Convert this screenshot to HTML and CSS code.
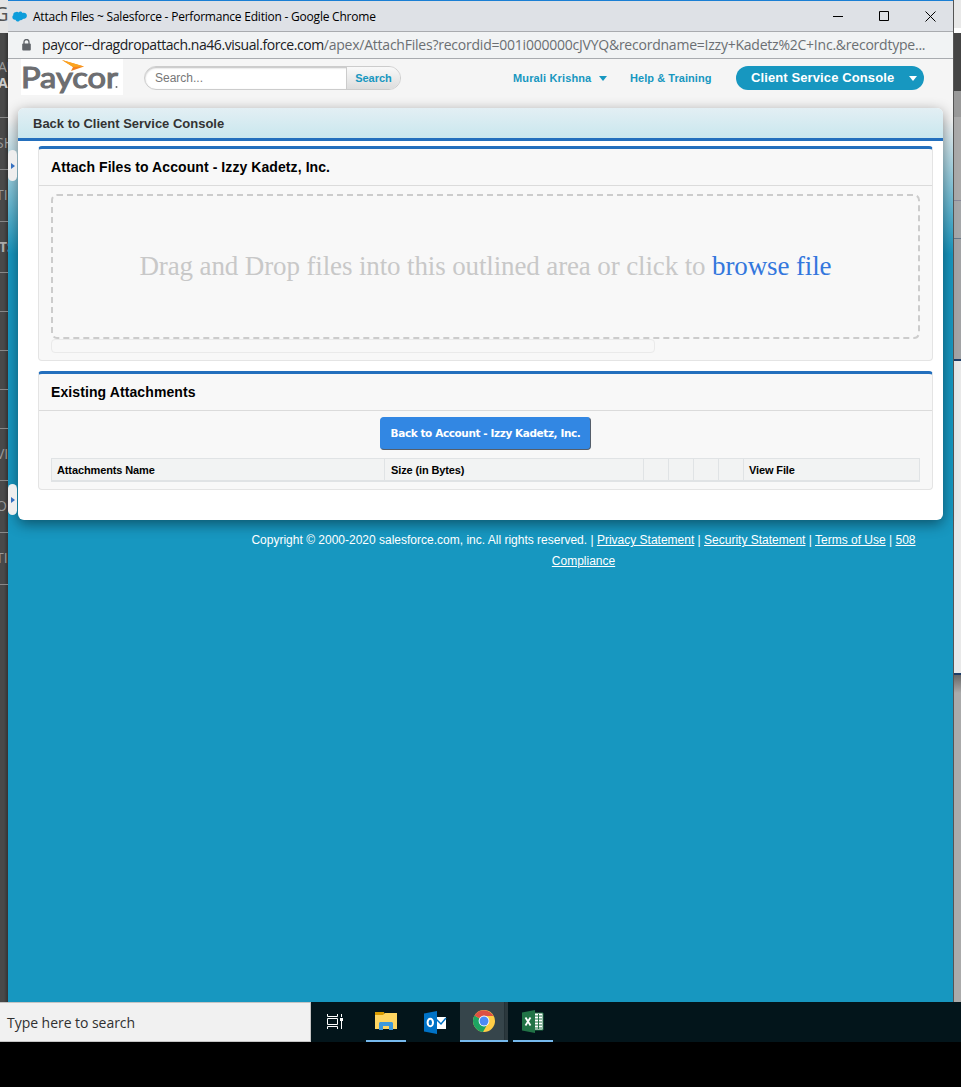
FILE: index.html
```html
<!DOCTYPE html>
<html lang="en">
<head>
<meta charset="utf-8">
<title>Attach Files ~ Salesforce - Performance Edition</title>
<link rel="stylesheet" href="styles.css">
</head>
<body>
<div class="desktop">
  <aside class="behind-left">
    <div class="bl-tab">G</div>
    <div class="bl-item bl-first"><span>AU</span><b>A</b></div>
    <div class="bl-item tall">SH</div>
    <div class="bl-item tall">TI</div>
    <div class="bl-item tall"><b class="dim">TS</b></div>
    <div class="bl-item"></div>
    <div class="bl-item"></div>
    <div class="bl-item"></div>
    <div class="bl-item"></div>
    <div class="bl-item tall">VI</div>
    <div class="bl-item tall">OF</div>
    <div class="bl-item tall last">TI</div>
  </aside>
  <main class="window">
    <div class="titlebar">
      <svg class="cloud" width="15" height="12" viewBox="0 0 15 12"><path d="M3.2 1.2C4.8.2 6 .7 6.500 1.500 8-.2 10 .6 10.500 2c2.200-.9 4.500.4 4.400 2.800 0 2.200-1.900 3.400-3.800 3-.7 1.300-2.100 1.600-3.100 1.100C7 11.200 4.200 11 3.500 8.800 1.600 9.200.2 7.800.4 6c0-1 .5-1.500 1-2C.8 3 1.600 1.700 3.200 1.200Z" fill="#0d9ddb"/></svg>
      <span class="t-title">Attach Files ~ Salesforce - Performance Edition - Google Chrome</span>
      <svg class="controls" width="104" height="12" viewBox="0 0 104 12" fill="none" stroke="#000"><path d="M0 5.500h10M46.500.5h9v9h-9zM92.500.5l10 10M102.500.5l-10 10"/></svg>
    </div>
    <div class="urlbar">
      <svg width="9" height="12" viewBox="0 0 9 12"><path d="M2 5V3a2.500 2.500 0 0 1 5 0v2" fill="none" stroke="#5f6368" stroke-width="1.300"/><rect x=".2" y="4.500" width="8.600" height="7" rx="1" fill="#5f6368"/></svg>
      <span class="t-url"><i>paycor--dragdropattach.na46.visual.force.com</i>/apex/AttachFiles?recordid=001i000000cJVYQ&amp;recordname=Izzy+Kadetz%2C+Inc.&amp;recordtype...</span>
    </div>
    <div class="page">
      <header class="head">
        <div class="logo">
          <svg width="102" height="35" viewBox="0 0 102 35"><path d="M41 1 63 7.500 50 12 52 8Z" fill="#f58220"/><path d="M41 1 63 7.500 52 8Z" fill="#fba51f"/><text x="0" y="29" class="logo-text" textLength="97" lengthAdjust="spacingAndGlyphs">Paycor</text><circle cx="95.500" cy="28" r="1" fill="#6d6e71"/></svg>
        </div>
        <div class="search"><span class="s-in">Search...</span><span class="s-btn">Search</span></div>
        <span class="user">Murali Krishna</span><i class="caret blue"></i>
        <span class="help">Help &amp; Training</span>
        <div class="app"><span>Client Service Console</span><i class="caret white"></i></div>
      </header>
      <section class="panel">
        <div class="panel-head">Back to Client Service Console</div>
        <div class="card upload">
          <h2 class="h-one">Attach Files to Account - Izzy Kadetz, Inc.</h2>
          <svg class="drop" width="869" height="145" viewBox="0 0 869 145"><rect x="1" y="1" width="867" height="143" rx="5" fill="none" stroke="#ccc" stroke-width="2" stroke-dasharray="6 4"/><text x="88.500" y="81" class="drop-text" textLength="692" lengthAdjust="spacing">Drag and Drop files into this outlined area or click to <tspan fill="#3377dd">browse file</tspan></text></svg>
          <div class="progress"></div>
        </div>
        <div class="card existing">
          <h2 class="h-two">Existing Attachments</h2>
          <div class="back"><span>Back to Account - Izzy Kadetz, Inc.</span></div>
          <div class="table"><span class="c1">Attachments Name</span><span class="c2">Size (in Bytes)</span><span></span><span></span><span></span><span></span><span class="c3">View File</span></div>
        </div>
      </section>
      <footer class="foot">
        <div class="f-one">Copyright © 2000-2020 salesforce.com, inc. All rights reserved. | <u>Privacy Statement</u> | <u>Security Statement</u> | <u>Terms of Use</u> | <u>508</u></div>
        <div class="f-two"><u>Compliance</u></div>
      </footer>
      <i class="handle h1"></i>
      <i class="handle h2"></i>
    </div>
  </main>
  <aside class="behind-right"><i class="r1"></i><i class="r2"></i><i class="r3"></i><i class="r4"></i><i class="r5"></i><i class="r6"></i><i class="r7"></i></aside>
</div>
<div class="taskbar">
  <div class="type"><span>Type here to search</span></div>
  <div class="task view"><svg width="18" height="18" viewBox="0 0 18 18" fill="none" stroke="#fff"><path d="M1.500 1v2.500h10V1M1.500 16v-2.500h10V16M1.500 5.500h10v6h-10zM15.500 1v3M15.500 8v8"/><path d="M14 5h3v3h-3z" fill="#fff" stroke="none"/></svg></div>
  <div class="task on"><svg width="22" height="19" viewBox="0 0 22 19"><path d="M0 0h9l1 3H0z" fill="#d99b00"/><path d="M0 3h8l2-2h12v16H0z" fill="#ffd561"/><path d="M4 18v-7l1-1h12l1 1v7h-4v-4H8v4z" fill="#3e99dc"/></svg></div>
  <div class="task"><svg width="24" height="23" viewBox="0 0 24 23"><path d="M12 6h11v12H12z" fill="#fff"/><path d="m13 8 5 5 5-6" fill="none" stroke="#0072c6" stroke-width="1.500"/><path d="M1 2.500 14 0v23L1 20.500z" fill="#0072c6"/><ellipse cx="7.300" cy="11.500" rx="2.700" ry="3.700" fill="none" stroke="#fff" stroke-width="2"/></svg></div>
  <div class="task active on"><svg width="24" height="24" viewBox="0 0 24 24"><circle cx="12" cy="12" r="11" fill="#ffcd46"/><path d="M12 12 2.500 6.500A11 11 0 0 0 11 23l5-9z" fill="#1da462"/><path d="M12 12 2.500 6.500A11 11 0 0 1 21.500 7H12z" fill="#dd5144"/><circle cx="12" cy="12" r="5.400" fill="#fff"/><circle cx="12" cy="12" r="4.500" fill="#4c8bf5"/></svg></div>
  <div class="task on"><svg width="24" height="23" viewBox="0 0 24 23"><path d="M13 3h9v17h-9z" fill="#fff" stroke="#217346"/><path d="M14 6h7M14 9h7M14 12h7M14 15h7M14 18h7M17.500 4v15" stroke="#217346"/><path d="M1 2.500 14 0v23L1 20.500z" fill="#217346"/><path d="m4.500 7.500 5 8M9.500 7.500l-5 8" stroke="#fff" stroke-width="1.800"/></svg></div>
</div>
</body>
</html>
```

FILE: styles.css
```css
* { box-sizing: border-box; }
body { margin: 0; width: 961px; height: 1087px; overflow: hidden; background: #000; font-family: "Liberation Sans", Arial, sans-serif; white-space: nowrap; }
.desktop { display: flex; height: 1002px; }

.behind-left { width: 8px; overflow: hidden; background: linear-gradient(90deg, #494949 50%, #333); color: #999; font: 14px/18px "Open Sans", sans-serif; }
.bl-tab { height: 33px; background: #e4e4e4; color: #555; font: 20px/28px "Open Sans", sans-serif; text-indent: -6px; }
.bl-item { height: 39px; border-bottom: 1px solid #888; text-indent: -4px; }
.bl-item.tall { height: 52px; padding-top: 16px; }
.bl-item:nth-child(5) { height: 51px; }
.bl-item.bl-first { height: 85px; padding-top: 26px; line-height: 16px; text-indent: -2px; }
.bl-item b { display: block; color: #ccc; }
.bl-item b.dim { color: #aaa; text-indent: -1px; }

.window { width: 945px; display: flex; flex-direction: column; border-top: 1px solid #1a7fd4; }
.titlebar { height: 31px; display: flex; align-items: center; background: #dee1e6; border-bottom: 1px solid #a9abaf; padding: 1px 16px 0 4px; }
.cloud { margin-right: 6px; }
.t-title { font: 12px/20px "Open Sans", "Noto Sans", sans-serif; letter-spacing: -0.22px; color: #000; }
.controls { margin-left: auto; }
.urlbar { height: 27px; display: flex; align-items: center; background: #f1f3f4; border-bottom: 1px solid #a8abaf; padding-left: 14px; }
.t-url { margin-left: 11px; color: #6b6f73; font: 14px/20px "Open Sans", "Noto Sans", sans-serif; letter-spacing: -0.23px; }
.t-url i { font-style: normal; letter-spacing: -.43px; color: #202124; }

.page { flex: 1; position: relative; background: linear-gradient(#f5f5f5 0, #f5f5f5 60px, #1797c0 195px); }
.head { height: 48px; display: flex; padding: 0 29px 0 13px; color: #1797c0; font-weight: bold; font-size: 11px; line-height: 38px; }
.logo { width: 102px; height: 36px; background: #fff; }
.logo-text { font: 28px Lato, sans-serif; fill: #6d6e71; stroke: #6d6e71; stroke-width: 1.1; }
.search { width: 257px; height: 24px; margin: 7px 0 0 21px; display: flex; line-height: 23px; border: 1px solid #ccc; border-radius: 12px; overflow: hidden; background: #fff; box-shadow: inset 0 1px 2px #bbb; }
.s-in { width: 201px; padding-left: 10px; color: #777; font-size: 12px; font-weight: normal; line-height: 22px; }
.s-btn { flex: 1; text-align: center; border-left: 1px solid #ccc; background: linear-gradient(#f9f9f9, #ddd); }
.user { width: 79px; margin-left: 112px; letter-spacing: .14px; }
.caret { width: 0; height: 0; border: 4px solid transparent; border-top: 5px solid; border-bottom: 0; }
.caret.blue { margin: 17px 23px 0 7px; }
.help { width: 82px; letter-spacing: .05px; }
.app { width: 188px; height: 24px; margin: 7px 0 0 auto; padding-left: 15px; display: flex; background: #1797c0; border-radius: 12px; color: #fff; font-size: 13px; line-height: 23px; }
.app span { width: 143px; letter-spacing: .11px; }
.caret.white { margin: 10px 0 0 15px; }

.panel { width: 925px; height: 412px; margin: 1px 0 0 10px; background: #fff; border-radius: 6px; box-shadow: 0 4px 14px rgba(0, 0, 0, .45); }
.panel-head { height: 33px; padding-left: 15px; border-bottom: 3px solid #236fbd; border-radius: 6px 6px 0 0; background: linear-gradient(#e3eff4, #c9e7ee); font-size: 13px; font-weight: bold; line-height: 31px; letter-spacing: -.01px; color: #333; }
.card { width: 895px; margin-left: 20px; padding: 0 12px; border: 1px solid #e4e4e4; border-top: 3px solid #236fbd; border-radius: 4px; background: #f8f8f8; }
.card.upload { height: 215px; margin-top: 5px; }
.card.existing { height: 119px; margin-top: 10px; }
.card h2 { height: 37px; margin: 0 -12px; padding-left: 12px; border-bottom: 1px solid #dbdbdb; font-size: 14px; line-height: 36px; color: #000; }
.card .h-one { letter-spacing: .08px; }
.card .h-two { letter-spacing: .1px; }
.drop { display: block; margin-top: 8px; }
.drop-text { font: 27px "Liberation Serif", "Times New Roman", serif; fill: #c8c8c8; }
.progress { width: 604px; height: 14px; border: 1px solid #eaeaea; border-radius: 4px; }
.back { width: 211px; height: 33px; margin: 6px auto 8px; background: #3287e3; border: 1px solid #3287e3; border-right-color: #555e6a; border-bottom-color: #555e6a; border-radius: 4px; color: #fff; text-align: center; font: bold 10.500px/31px "DejaVu Sans", Verdana, sans-serif; }
.back span { display: inline-block; letter-spacing: -.41px; }
.table { height: 24px; display: grid; grid-template-columns: 333px 259px 25px 25px 25px 25px 1fr; border: 1px solid #e0e3e5; border-bottom-width: 2px; background: #f2f3f3; font-size: 11px; font-weight: bold; line-height: 22px; letter-spacing: -.12px; }
.table span { padding-left: 5px; border-right: 1px solid #e0e3e5; }
.table span:last-child { border: 0; }
.table .c2 { padding-left: 6px; }

.foot { width: 665px; margin: 10px 0 0 243px; color: #fff; font-size: 12px; line-height: 21px; text-align: center; }
.handle { position: absolute; left: 0; width: 9px; height: 31px; border-radius: 5px; background: #eee; display: flex; align-items: center; }
.handle::after { content: ""; margin-left: 3px; border: 3px solid transparent; border-left: 4px solid #336fc0; border-right: 0; }
.h1 { top: 91px; }
.h2 { top: 425px; }

.behind-right { width: 8px; display: flex; flex-direction: column; border-left: 1px solid #555; }
.r1 { height: 33px; background: #e8e8e8; border-bottom: 5px solid #fff; }
.r2 { height: 58px; background: #444; }
.r3 { height: 110px; background: #aaa; border-top: 26px solid #999; border-bottom: 1px solid #889; }
.r4 { height: 38px; background: #a5a7a9; border-bottom: 1px solid #678; }
.r5 { height: 122px; background: #a2a3a5; border-bottom: 2px solid #1c3c66; }
.r6 { height: 314px; background: #e8e8e8; border-bottom: 2px solid #1c3c66; }
.r7 { flex: 1; background: linear-gradient(#666, #aaa 18px); }

.taskbar { height: 40px; display: flex; background: #03151b; }
.type { width: 311px; padding-left: 7px; background: #f1f1f1; border: 1px solid #c4c4c4; border-left: 0; font: 14px/39px "Open Sans", "Noto Sans", sans-serif; color: #303030; }
.type span { letter-spacing: -.04px; }
.task { width: 40px; height: 40px; margin-right: 9px; display: flex; align-items: center; justify-content: center; }
.task.view { width: 48px; margin-right: 7px; }
.task.on { border-bottom: 2px solid #76b9ed; }
.task.active { width: 48px; margin: 0 5px 0 -4px; background: linear-gradient(90deg, #36454b 44px, #1b292f 44px, #2b383d 45px); }
```
